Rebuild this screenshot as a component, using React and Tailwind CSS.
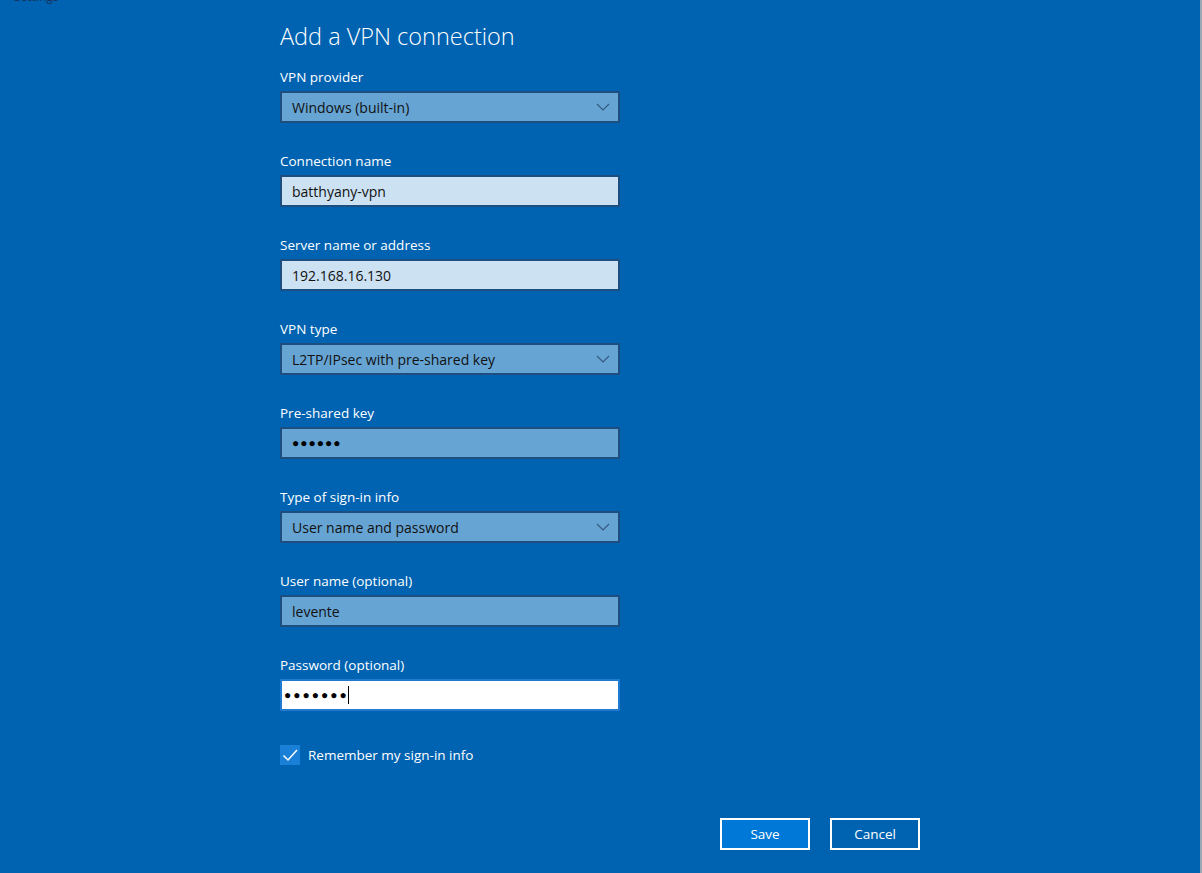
const fields = [
  { label: "VPN provider", value: "Windows (built-in)", kind: "select" },
  { label: "Connection name", value: "batthyany-vpn", kind: "light" },
  { label: "Server name or address", value: "192.168.16.130", kind: "light" },
  { label: "VPN type", value: "L2TP/IPsec with pre-shared key", kind: "select" },
  { label: "Pre-shared key", value: "●●●●●●", kind: "secret" },
  { label: "Type of sign-in info", value: "User name and password", kind: "select" },
  { label: "User name (optional)", value: "levente", kind: "mid" },
  { label: "Password (optional)", value: "●●●●●●●", kind: "focus" },
];

function Chevron() {
  return (
    <svg viewBox="0 0 14 8" className="h-[8px] w-[14px]" fill="none" stroke="#34597d" strokeWidth="1.1">
      <path d="M1 1 L7 7 L13 1" />
    </svg>
  );
}

function Field({ field }) {
  if (field.kind === "focus") {
    return (
      <div className="flex h-[32px] w-[340px] items-center border-2 border-[#1f7ad0] bg-white pl-[2px]">
        <span className="text-[12px] leading-none tracking-[2px] text-black">{field.value}</span>
        <span className="-ml-[1px] h-[18px] w-px bg-black" />
      </div>
    );
  }

  const bg = field.kind === "light" ? "bg-[#cce1f2]" : "bg-[#66a4d4]";

  return (
    <div
      className={`flex h-[32px] w-[340px] items-center justify-between border-2 border-[#1c4f80] ${bg} pl-[10px] pr-[8px]`}
    >
      {field.kind === "secret" ? (
        <span className="text-[12px] leading-none tracking-[1px] text-black">{field.value}</span>
      ) : (
        <span className="text-[14px] text-[#111]">{field.value}</span>
      )}
      {field.kind === "select" && <Chevron />}
    </div>
  );
}

export default function App() {
  return (
    <div
      className="relative h-[873px] w-full overflow-hidden border-r-2 border-[#9aa7b5] bg-[#0063b1] text-white"
      style={{ fontFamily: '"Open Sans", "Noto Sans", sans-serif' }}
    >
      <div className="flex h-[4px] items-end justify-between overflow-hidden px-[14px] text-[12px] leading-[14px] text-[#16325c]">
        <span>Settings</span>
        <span className="mr-[10px] flex gap-[36px] text-[12px]">
          <span>—</span>
          <span>✕</span>
        </span>
      </div>

      <div className="pl-[280px] pt-[14px]">
        <h1 className="text-[23.5px] leading-[36px] font-light text-white">Add a VPN connection</h1>

        <div className="mt-[13px] flex flex-col gap-[28px]">
          {fields.map((field) => (
            <div key={field.label} className="flex flex-col gap-[4px]">
              <label className="text-[13.5px] leading-[20px]">{field.label}</label>
              <Field field={field} />
            </div>
          ))}
        </div>

        <div className="mt-[34px] flex items-center gap-[8px]">
          <span className="flex h-[20px] w-[20px] items-center justify-center bg-[#1a7fd6]">
            <svg viewBox="0 0 20 20" className="h-[20px] w-[20px]" fill="none" stroke="white" strokeWidth="1.5">
              <path d="M3.5 10.5 L8 15 L17 5" />
            </svg>
          </span>
          <span className="text-[13.5px]">Remember my sign-in info</span>
        </div>

        <div className="mt-[53px] flex w-[640px] justify-end gap-[20px]">
          <button className="h-[32px] w-[90px] border-2 border-white bg-[#0078d7] text-[13.5px] text-white">
            Save
          </button>
          <button className="h-[32px] w-[90px] border-2 border-white bg-transparent text-[13.5px] text-white">
            Cancel
          </button>
        </div>
      </div>
    </div>
  );
}
